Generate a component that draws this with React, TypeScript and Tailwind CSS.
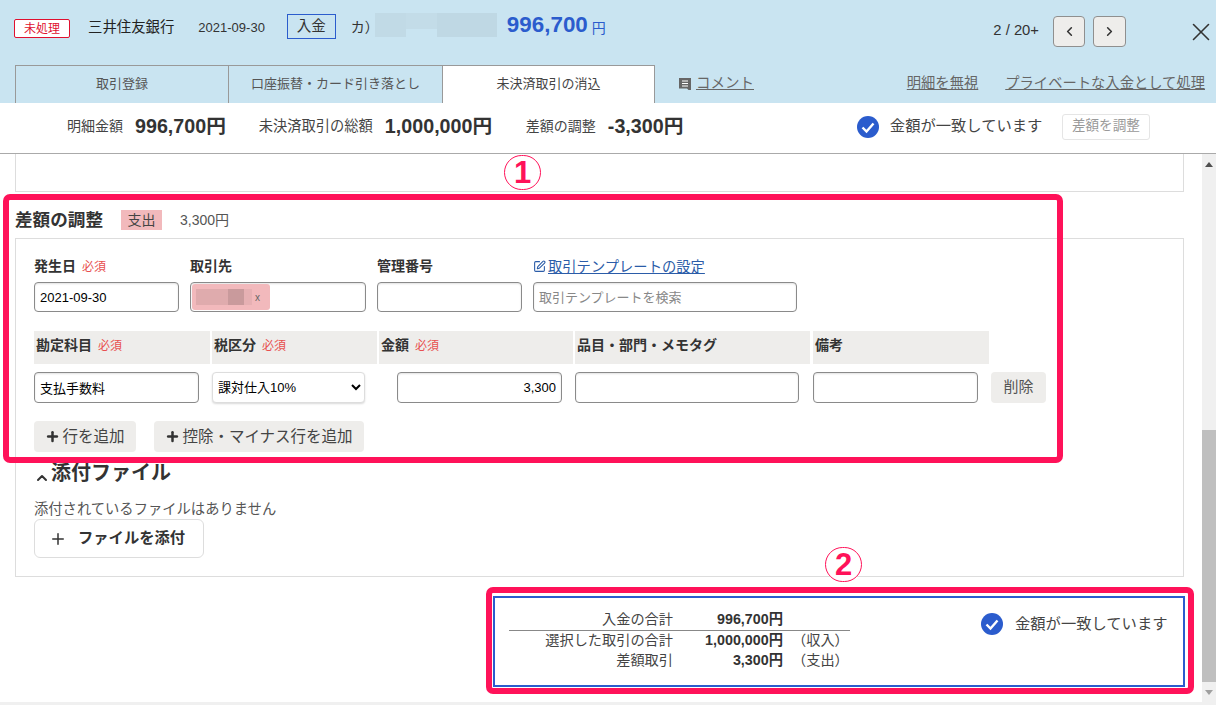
import React from "react";
import { ChevronLeft, ChevronRight, ChevronUp, X, Plus, SquarePen } from "lucide-react";

const font = { fontFamily: '"Liberation Sans","Noto Sans CJK JP",sans-serif' };

function Check() {
  return (
    <svg width="22" height="22" viewBox="0 0 22 22" className="shrink-0">
      <circle cx="11" cy="11" r="11" fill="#2b5ccd" />
      <path d="M5.5 11.5l4 4 7-8" fill="none" stroke="#fff" strokeWidth="2.4" />
    </svg>
  );
}

function Req() {
  return <span className="ml-[6px] text-[12px] font-normal text-[#e8504f]">必須</span>;
}

const inputCls =
  "rounded-[4px] border border-[#8a8a8a] bg-white px-[5px] text-[13px] text-black shadow-[inset_0_1px_2px_rgba(0,0,0,0.12)] outline-none";

function Head({ w, children }: { w: string; children: React.ReactNode }) {
  return (
    <div className={`${w} flex h-[33px] shrink-0 items-center bg-[#eeedeb] pb-[4px] pl-[2px] text-[14px] font-bold text-[#333]`}>
      {children}
    </div>
  );
}

function Num({ n, cls }: { n: string; cls: string }) {
  return (
    <div className={`absolute ${cls} flex h-[35px] w-[37px] items-center justify-center rounded-full border-[1.5px] border-[#ff1259] bg-white text-[31px] font-bold leading-none text-[#ff1259]`}>
      {n}
    </div>
  );
}

export default function App() {
  return (
    <div style={font} className="relative flex h-[705px] w-[1216px] flex-col overflow-hidden bg-white text-[#333]">
      {/* header */}
      <div className="h-[103px] shrink-0 bg-[#c9e4f1]">
        <div className="flex h-[65px] pt-[13px]">
          <div className="ml-[14px] mt-[6px] flex h-[19px] w-[56px] items-center justify-center rounded-[2px] border border-[#e0102f] bg-white text-[12px] text-[#e0102f]">未処理</div>
          <div className="ml-[18px] mt-[4px] text-[14.4px] leading-[20px] text-[#222]">三井住友銀行</div>
          <div className="ml-[24px] mt-[6px] text-[13px] leading-[18px]">2021-09-30</div>
          <div className="ml-[22px] mt-[1px] flex h-[25px] w-[49px] items-center justify-center border border-[#2b5ccd] text-[14.5px]">入金</div>
          <div className="ml-[15px] mt-[4px] w-[24px] text-[14px] leading-[20px]">カ）</div>
          <div className="flex h-[24px] w-[122px]">
            <div className="h-full w-[31px] bg-[#c1dae6]" />
            <div className="h-[16px] w-[31px] bg-[#c3dce8]" />
            <div className="h-full w-[60px] bg-[#bfd8e4]" />
          </div>
          <div className="ml-[10px] text-[22.4px] font-bold leading-[24px] text-[#2b5ccd]">996,700</div>
          <div className="ml-[4px] mt-[7px] text-[14px] leading-[16px] text-[#2b5ccd]">円</div>
          <div className="ml-auto mt-[8px] text-[14.8px] leading-[18px]">2 / 20+</div>
          <div className="ml-[14px] mt-[3px] flex h-[31px] w-[32px] items-center justify-center rounded-[4px] border border-[#8f8f8f] bg-[#eeedeb]">
            <ChevronLeft size={15} strokeWidth={2.5} />
          </div>
          <div className="ml-[8px] mt-[3px] flex h-[31px] w-[33px] items-center justify-center rounded-[4px] border border-[#8f8f8f] bg-[#eeedeb]">
            <ChevronRight size={15} strokeWidth={2.5} />
          </div>
          <X size={30} strokeWidth={1.3} className="ml-[60px] mt-[4px] text-[#333]" />
        </div>
        <div className="flex h-[38px] items-stretch pl-[15px] text-[13px]">
          <div className="flex w-[213px] items-center justify-center border-l border-t border-[#999] pb-[1px] text-[#555]">取引登録</div>
          <div className="flex w-[214px] items-center justify-center border-l border-t border-[#999] pb-[1px] text-[#555]">口座振替・カード引き落とし</div>
          <div className="flex w-[213px] items-center justify-center border-x border-t border-[#999] bg-white pb-[1px] text-[#444]">未決済取引の消込</div>
          <div className="ml-[24px] flex items-center pb-[1px] text-[14.5px] text-[#666]">
            <svg width="12" height="12" viewBox="0 0 12 12" className="mr-[5px]">
              <path d="M0 0h12v12H9.500L8 10.500H0z" fill="#666" />
              <path d="M3 3h6M3 5.500h6M3 8h6" stroke="#fff" strokeWidth="1" />
            </svg>
            <span className="underline">コメント</span>
          </div>
          <div className="ml-auto flex items-center pb-[1px] pr-[11px] text-[14.3px] text-[#666] underline">
            <span>明細を無視</span>
            <span className="ml-[27px]">プライベートな入金として処理</span>
          </div>
        </div>
      </div>

      {/* summary bar */}
      <div className="flex h-[51px] shrink-0 items-center whitespace-nowrap border-b border-[#aaa] pb-[3px] pl-[67px] text-[14px] text-[#444]">
        <span>明細金額</span>
        <span className="ml-[12px] text-[19.7px] font-bold text-[#333]">996,700円</span>
        <span className="ml-[33px] w-[114px] text-[14.25px]">未決済取引の総額</span>
        <span className="ml-[12px] w-[107px] text-[19.7px] font-bold text-[#333]">1,000,000円</span>
        <span className="ml-[34px] w-[70px]">差額の調整</span>
        <span className="ml-[12px] w-[75px] text-[19.7px] font-bold text-[#333]">-3,300円</span>
        <span className="ml-[174px]"><Check /></span>
        <span className="ml-[11px] w-[153px] text-[15.3px]">金額が一致しています</span>
        <span className="ml-[19px] flex h-[26px] w-[88px] items-center justify-center rounded-[3px] border border-[#e5e5e5] text-[13.6px] text-[#999]">差額を調整</span>
      </div>

      {/* body */}
      <div className="flex min-h-0 flex-1">
        <div className="min-w-0 flex-1 pl-[15px] pr-[18px]">
          <div className="h-[38px] border-x border-b border-[#ddd]" />
          <div className="flex h-[46px] items-center pt-[10px]">
            <span className="text-[17.6px] font-bold text-[#333]">差額の調整</span>
            <span className="ml-[18px] flex h-[20px] w-[41px] items-center justify-center bg-[#f2b9bc] text-[14px] text-[#444]">支出</span>
            <span className="ml-[18px] text-[14px] text-[#555]">3,300円</span>
          </div>
          <div className="h-[339px] border border-[#ddd] pl-[18px]">
            <div className="flex pt-[19px] text-[14px] font-bold">
              <div className="w-[156px] leading-[16px]">発生日<Req /></div>
              <div className="w-[187px] leading-[16px]">取引先</div>
              <div className="w-[156px] leading-[16px]">管理番号</div>
              <div className="flex items-center text-[14.3px] font-normal leading-[14px] text-[#2b5ca8] underline">
                <SquarePen size={13} className="mr-[2px]" />取引テンプレートの設定
              </div>
            </div>
            <div className="mt-[7px] flex">
              <input defaultValue="2021-09-30" className={`${inputCls} h-[30px] w-[145px]`} />
              <div className={`${inputCls} ml-[11px] flex h-[30px] w-[176px] items-center !px-0 !pl-[1px]`}>
                <div className="flex h-[26px] w-[78px] items-center rounded-[3px] bg-[#f2b9bc] pl-[4px]">
                  <div className="h-[16px] w-[32px] bg-[#dfabad]" />
                  <div className="h-[16px] w-[16px] bg-[#c99a9c]" />
                  <div className="h-[16px] w-[8px] bg-[#e6b0b3]" />
                  <span className="ml-[3px] text-[10px] text-[#666]">x</span>
                </div>
              </div>
              <input className={`${inputCls} ml-[11px] h-[30px] w-[145px]`} />
              <input placeholder="取引テンプレートを検索" className={`${inputCls} ml-[11px] h-[30px] w-[264px] placeholder:text-[#888]`} />
            </div>

            <div className="mt-[19px] flex gap-[2px]">
              <Head w="w-[176px]">勘定科目<Req /></Head>
              <Head w="w-[165px]">税区分<Req /></Head>
              <Head w="w-[194px]">金額<Req /></Head>
              <Head w="w-[235px] mr-[1px]">品目・部門・メモタグ</Head>
              <Head w="w-[176px]">備考</Head>
            </div>
            <div className="mt-[8px] flex">
              <input defaultValue="支払手数料" className={`${inputCls} h-[31px] w-[165px]`} />
              <select className="ml-[13px] h-[31px] w-[153px] rounded-[4px] border border-[#ddd] bg-white px-[1px] text-[13px] text-black shadow-[0_1px_2px_rgba(0,0,0,0.15)]">
                <option>課対仕入10%</option>
              </select>
              <input defaultValue="3,300" className={`${inputCls} ml-[32px] h-[31px] w-[165px] text-right`} />
              <input className={`${inputCls} ml-[13px] h-[31px] w-[224px]`} />
              <input className={`${inputCls} ml-[14px] h-[31px] w-[165px]`} />
              <div className="ml-[13px] flex h-[31px] w-[55px] items-center justify-center rounded-[4px] bg-[#eeedeb] text-[15px] text-[#555]">削除</div>
            </div>
            <div className="mt-[18px] flex">
              <div className="flex h-[31px] w-[102px] items-center justify-center rounded-[4px] bg-[#eeedeb] text-[15.5px] text-[#444]">
                <Plus size={15} strokeWidth={4} className="mr-[2px] text-[#333]" />行を追加
              </div>
              <div className="ml-[18px] flex h-[31px] w-[210px] items-center justify-center rounded-[4px] bg-[#eeedeb] text-[15.5px] text-[#444]">
                <Plus size={15} strokeWidth={4} className="mr-[2px] text-[#333]" />控除・マイナス行を追加
              </div>
            </div>
            <div className="mt-[7px] flex h-[28px] items-center text-[20px] font-bold leading-[28px] text-[#333]">
              <ChevronUp size={16} strokeWidth={3} className="mr-[1px] mt-[10px]" />添付ファイル
            </div>
            <div className="mt-[12px] text-[14.3px] leading-[20px] text-[#555]">添付されているファイルはありません</div>
            <div className="flex h-[39px] w-[170px] items-center rounded-[6px] border border-[#ddd] pl-[14px] text-[15.3px] font-bold text-[#333]">
              <Plus size={18} strokeWidth={2} className="mr-[11px]" />ファイルを添付
            </div>
          </div>

          {/* totals */}
          <div className="ml-[478px] mt-[19px] flex h-[91px] w-[692px] border-2 border-[#2b5ccd] pl-[14px] pt-[12px] text-[14.2px]">
            <div className="w-[341px]">
              <div className="flex h-[20px] items-center">
                <span className="w-[164px] text-right text-[#444]">入金の合計</span>
                <span className="w-[110px] text-right text-[14.3px] font-bold">996,700円</span>
              </div>
              <div className="flex h-[21px] items-center border-t border-[#888]">
                <span className="w-[164px] text-right text-[#444]">選択した取引の合計</span>
                <span className="w-[110px] text-right text-[14.3px] font-bold">1,000,000円</span>
                <span className="ml-[9px] text-[#444]">（収入）</span>
              </div>
              <div className="flex h-[20px] items-center">
                <span className="w-[164px] text-right text-[#444]">差額取引</span>
                <span className="w-[110px] text-right text-[14.3px] font-bold">3,300円</span>
                <span className="ml-[9px] text-[#444]">（支出）</span>
              </div>
            </div>
            <div className="ml-[131px] mt-[3px] flex h-[22px] items-center text-[15.3px] text-[#444]">
              <Check />
              <span className="ml-[12px]">金額が一致しています</span>
            </div>
          </div>
        </div>

        {/* scrollbar */}
        <div className="flex w-[14px] shrink-0 flex-col bg-[#f0f0f0]">
          <div className="flex h-[20px] items-center justify-center">
            <div className="h-0 w-0 border-x-[4px] border-b-[5px] border-x-transparent border-b-[#505050]" />
          </div>
          <div className="mt-[256px] h-[252px] bg-[#bfbfbf]" />
          <div className="flex h-[20px] items-center justify-center">
            <div className="h-0 w-0 border-x-[4px] border-t-[5px] border-x-transparent border-t-[#a0a0a0]" />
          </div>
        </div>
      </div>
      <div className="h-[3px] shrink-0 bg-[#f0f0f0]" />

      {/* annotations */}
      <div className="pointer-events-none absolute left-[3px] top-[194px] h-[269px] w-[1060px] rounded-[7px] border-[6px] border-[#ff1259]" />
      <div className="pointer-events-none absolute left-[486px] top-[587px] h-[107px] w-[708px] rounded-[7px] border-[6px] border-[#ff1259]" />
      <Num n="1" cls="left-[504px] top-[155px]" />
      <Num n="2" cls="left-[825px] top-[547px]" />
    </div>
  );
}
